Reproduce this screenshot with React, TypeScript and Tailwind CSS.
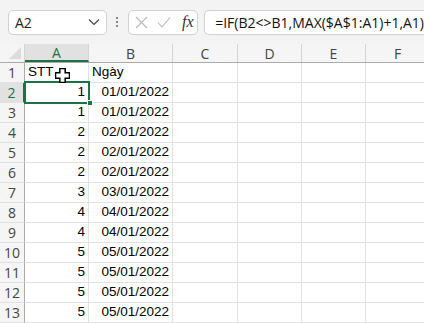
import React from 'react';

const cols = [
  { key: 'A', w: 'w-[64px]' },
  { key: 'B', w: 'w-[84px]' },
  { key: 'C', w: 'w-[65px]' },
  { key: 'D', w: 'w-[64px]' },
  { key: 'E', w: 'w-[64px]' },
  { key: 'F', w: 'w-[64px]' },
];

const rows: [string, string][] = [
  ['STT', 'Ngày'],
  ['1', '01/01/2022'],
  ['1', '01/01/2022'],
  ['2', '02/01/2022'],
  ['2', '02/01/2022'],
  ['2', '02/01/2022'],
  ['3', '03/01/2022'],
  ['4', '04/01/2022'],
  ['4', '04/01/2022'],
  ['5', '05/01/2022'],
  ['5', '05/01/2022'],
  ['5', '05/01/2022'],
  ['5', '05/01/2022'],
];

const uiFont = "font-['Open_Sans','Noto_Sans',sans-serif]";
const cellFont = "font-['Liberation_Sans',Arial,sans-serif]";

function CellCursor() {
  return (
    <svg width="15" height="15" viewBox="0 0 14 14" className="absolute left-[55px] top-[68px]">
      <path
        d="M4.5 0.5h5v4h4v5h-4v4h-5v-4h-4v-5h4z"
        fill="white"
        stroke="black"
        strokeWidth="1.4"
      />
    </svg>
  );
}

export default function App() {
  return (
    <div className={`w-[424px] h-[323px] overflow-hidden bg-white relative ${uiFont}`}>
      {/* formula bar */}
      <div className="h-[44px] bg-[#f3f3f3] flex items-center pl-[8px] gap-0">
        <div className="w-[101px] h-[25px] bg-white border border-[#d1d1d1] rounded-[5px] flex items-center justify-between pl-[6px] pr-[6px]">
          <span className="text-[14px] text-[#222]">A2</span>
          <svg width="12" height="8" viewBox="0 0 12 8">
            <path d="M1 1.5l5 5 5-5" fill="none" stroke="#444" strokeWidth="1.2" />
          </svg>
        </div>
        <div className="w-[22px] flex flex-col items-center gap-[2px]">
          <span className="w-[2px] h-[2px] bg-[#888]" />
          <span className="w-[2px] h-[2px] bg-[#888]" />
          <span className="w-[2px] h-[2px] bg-[#888]" />
        </div>
        <div className="w-[72px] h-[25px] bg-white border border-[#d1d1d1] rounded-[5px] flex items-center pl-[6px] gap-[9px]">
          <svg width="13" height="13" viewBox="0 0 13 13">
            <path d="M1 1l11 11M12 1L1 12" stroke="#b8b8b8" strokeWidth="1.1" />
          </svg>
          <svg width="14" height="11" viewBox="0 0 14 11">
            <path d="M1 5.5l4 4.5 8-9.5" fill="none" stroke="#b8b8b8" strokeWidth="1.1" />
          </svg>
          <span className="text-[16px] italic text-[#333] font-['Liberation_Serif',serif] leading-none ml-[2px]">fx</span>
        </div>
        <div className="ml-[6px] flex-1 h-[25px] bg-white border border-[#d1d1d1] border-r-0 rounded-l-[5px] flex items-center pl-[10px]">
          <span className="text-[14px] text-[#111] whitespace-nowrap">=IF(B2&lt;&gt;B1,MAX($A$1:A1)+1,A1)</span>
        </div>
      </div>

      {/* column headers */}
      <div className="flex h-[19px] bg-[#f5f5f5] border-b border-[#ababab]">
        <div className="w-[25px] shrink-0 relative border-r border-[#d4d4d4]">
          <svg width="14" height="14" viewBox="0 0 14 14" className="absolute right-[2px] bottom-[2px]">
            <path d="M13 1L13 13L1 13z" fill="#dcdcdc" />
          </svg>
        </div>
        {cols.map((c) => (
          <div
            key={c.key}
            className={`${c.w} shrink-0 flex items-center justify-center text-[14px] border-r border-[#d4d4d4] ${
              c.key === 'A'
                ? 'bg-[#e1e1e1] text-[#1e7145] border-b-2 border-b-[#1e7145] pt-[1px]'
                : 'text-[#444]'
            }`}
          >
            {c.key}
          </div>
        ))}
      </div>

      {/* grid */}
      <div className="flex flex-col">
        {rows.map((r, i) => {
          const n = i + 1;
          const header = n === 1;
          return (
            <div key={n} className="flex h-[20px]">
              <div
                className={`w-[25px] shrink-0 flex items-center justify-center text-[14px] border-b border-[#e1e1e1] ${
                  n === 2
                    ? 'bg-[#e1e1e1] text-[#1e7145] border-r-2 border-r-[#1e7145]'
                    : 'bg-[#f5f5f5] text-[#444] border-r border-r-[#ababab]'
                }`}
              >
                {n}
              </div>
              {cols.map((c, ci) => {
                const v = ci === 0 ? r[0] : ci === 1 ? r[1] : '';
                return (
                  <div
                    key={c.key}
                    className={`${c.w} shrink-0 border-r border-b border-[#e1e1e1] flex items-center text-[13.5px] text-black ${cellFont} ${
                      header ? 'justify-start pl-[3px]' : 'justify-end pr-[3px]'
                    }`}
                  >
                    {v}
                  </div>
                );
              })}
            </div>
          );
        })}
      </div>

      {/* selection */}
      <div className="absolute left-[24px] top-[81px] w-[66px] h-[23px] border-2 border-[#1e7145] pointer-events-none" />
      <div className="absolute left-[87px] top-[100px] w-[6px] h-[6px] bg-[#1e7145] border border-white" />

      <CellCursor />
    </div>
  );
}
